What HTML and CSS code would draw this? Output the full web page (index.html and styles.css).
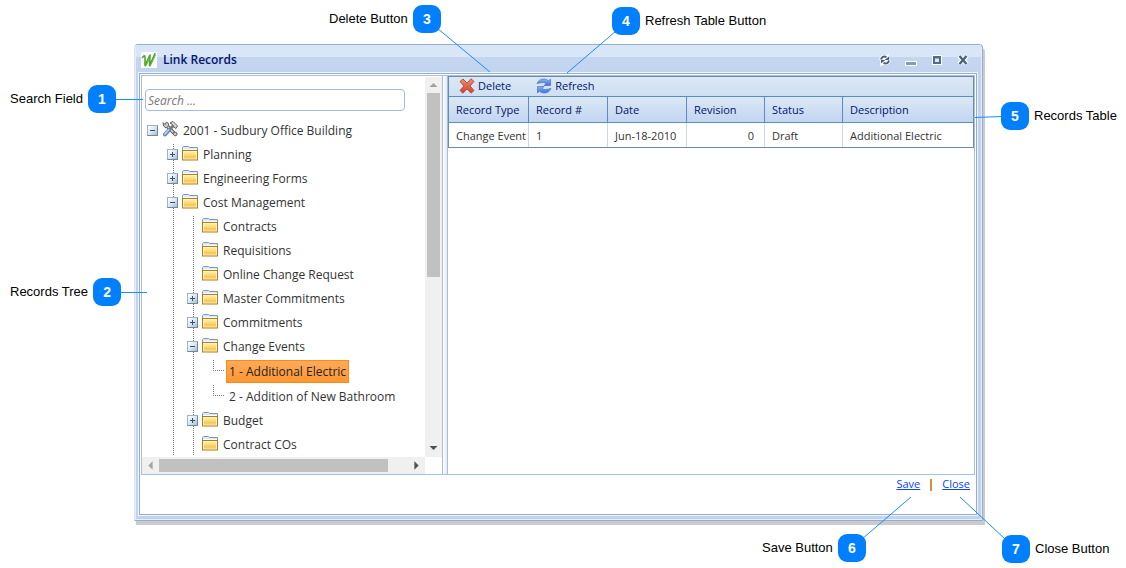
FILE: index.html
```html
<!DOCTYPE html>
<html lang="en">
<head>
<meta charset="utf-8">
<title>Link Records</title>
<link rel="stylesheet" href="styles.css">
</head>
<body>
<svg class="defs" aria-hidden="true">
  <defs>
    <linearGradient id="gold" x1="0" y1="0" x2="0" y2="1"><stop offset="0" stop-color="#fdeaa6"/><stop offset=".45" stop-color="#fbd879"/><stop offset=".7" stop-color="#f6c44f"/><stop offset="1" stop-color="#fde28c"/></linearGradient>
    <linearGradient id="red" x1="0" y1="0" x2="0" y2="1"><stop offset="0" stop-color="#ee8d75"/><stop offset="1" stop-color="#d2402c"/></linearGradient>
    <linearGradient id="blue" x1="0" y1="0" x2="0" y2="1"><stop offset="0" stop-color="#8db3ee"/><stop offset="1" stop-color="#3f70d0"/></linearGradient>
    <symbol id="folder" viewBox="0 0 16 15">
      <path d="M.5 4V1.500L1.500 .5H6.500L7.500 1.500H15.500V4" fill="#dcebf5" stroke="#8296a8"/>
      <path d="M1 3.500H15" stroke="#f5fbff"/>
      <rect x=".5" y="4.500" width="15" height="9.500" fill="#fff3c8" stroke="#aa8018"/>
      <rect x="2" y="6" width="12" height="7" fill="url(#gold)"/>
    </symbol>
  </defs>
</svg>
<main class="page">
  <section class="window" aria-labelledby="window-title">
    <header class="titlebar">
      <svg class="logo" viewBox="0 0 16 16" aria-hidden="true"><rect width="16" height="16" fill="#fff"/><path d="M1.500 5.500Q4 2 4 6L4 13.500L9 3L8.500 13.500L14 1.500" fill="none" stroke="#4fa62c" stroke-width="1.600" stroke-linejoin="round" stroke-linecap="round"/><path d="M4.500 14.500L8.500 7M9 14.500L14.500 3" stroke="#5fb034"/></svg>
      <h1 id="window-title">Link Records</h1>
      <div class="window-tools">
        <button type="button" aria-label="Reload"><svg viewBox="0 0 12 12"><path d="M1 5Q2 1 7 2L9 1V6H5L3 7ZM11 7Q10 11 5 10L2 11.500V6H7L9 5Z" fill="#fff" stroke="#fff" stroke-width="1.500"/><path d="M2 5.500Q3 1.500 7.500 3M10 6.500Q9 10.500 4.500 9" fill="none" stroke="#4c617d" stroke-width="2"/><path d="M10 2.500V6H5.500ZM2 9.500V6H6.500Z" fill="#4c617d"/></svg></button>
        <button type="button" aria-label="Minimize"><svg viewBox="0 0 12 12"><path d="M0 7H12V12H0Z" fill="#fff"/><path d="M1 8H11V11H1Z" fill="#8799b3"/></svg></button>
        <button type="button" aria-label="Maximize"><svg viewBox="0 0 12 12"><path d="M1 1H11V11H1Z" fill="#fff"/><path d="M2 2H10V10H2Z" fill="#566b88"/><path d="M4 4.500H8V8H4Z" fill="#dce7f5"/></svg></button>
        <button type="button" aria-label="Close window"><svg viewBox="0 0 12 12"><path d="M2 2L10 10M10 2L2 10" stroke="#fff" stroke-width="4.500"/><path d="M2.500 2L9.500 10M9.500 2L2.500 10" stroke="#4c617d" stroke-width="2.400"/></svg></button>
      </div>
    </header>
    <div class="frame">
      <div class="panes">
        <aside class="tree-pane">
          <div class="tree-view">
            <input class="search" type="text" placeholder="Search ..." aria-label="Search">
            <ul class="tree">
              <li>
                <div class="node"><button type="button" class="toggle open" aria-label="Collapse project"></button>
                  <svg class="tools" viewBox="0 0 16 16" aria-hidden="true"><path d="M4 4L13 13" stroke="#555" stroke-width="3.500" stroke-linecap="round"/><path d="M4 4L13 13" stroke="#ddd" stroke-width="1.500"/><path d="M1 1.500L3 3.500L4.500 1L6.500 2.500V5L4 7L1.500 5Z" fill="#c8c8c8" stroke="#666"/><path d="M12 4L7 9" stroke="#777" stroke-width="3"/><path d="M8 2L11 .500L15.500 5L14 7.500L12 6L10.500 3.500Z" fill="#ddd" stroke="#5b5b5b"/><path d="M7 9L3 13.500" stroke="#6985bf" stroke-width="4" stroke-linecap="round"/><path d="M6.500 9L3 13" stroke="#b9cff4" stroke-width="1.800" stroke-linecap="round"/><path d="M12 11L15 12V14L13 15L11 13Z" fill="#ccc" stroke="#666"/></svg>
                  <span>2001 - Sudbury Office Building</span></div>
                <ul class="branch">
                  <li><div class="node"><button type="button" class="toggle" aria-label="Expand Planning"></button><svg class="folder"><use href="#folder"/></svg><span>Planning</span></div></li>
                  <li><div class="node"><button type="button" class="toggle" aria-label="Expand Engineering Forms"></button><svg class="folder"><use href="#folder"/></svg><span>Engineering Forms</span></div></li>
                  <li><div class="node"><button type="button" class="toggle open" aria-label="Collapse Cost Management"></button><svg class="folder"><use href="#folder"/></svg><span>Cost Management</span></div>
                    <ul class="branch">
                      <li><div class="node plain"><svg class="folder"><use href="#folder"/></svg><span>Contracts</span></div></li>
                      <li><div class="node plain"><svg class="folder"><use href="#folder"/></svg><span>Requisitions</span></div></li>
                      <li><div class="node plain"><svg class="folder"><use href="#folder"/></svg><span>Online Change Request</span></div></li>
                      <li><div class="node"><button type="button" class="toggle" aria-label="Expand Master Commitments"></button><svg class="folder"><use href="#folder"/></svg><span>Master Commitments</span></div></li>
                      <li><div class="node"><button type="button" class="toggle" aria-label="Expand Commitments"></button><svg class="folder"><use href="#folder"/></svg><span>Commitments</span></div></li>
                      <li><div class="node"><button type="button" class="toggle open" aria-label="Collapse Change Events"></button><svg class="folder"><use href="#folder"/></svg><span>Change Events</span></div>
                        <ul class="leaves">
                          <li><span class="leaf selected">1 - Additional Electric</span></li>
                          <li><span class="leaf">2 - Addition of New Bathroom</span></li>
                        </ul>
                      </li>
                      <li><div class="node"><button type="button" class="toggle" aria-label="Expand Budget"></button><svg class="folder"><use href="#folder"/></svg><span>Budget</span></div></li>
                      <li><div class="node plain"><svg class="folder"><use href="#folder"/></svg><span>Contract COs</span></div></li>
                    </ul>
                  </li>
                </ul>
              </li>
            </ul>
          </div>
          <div class="vscroll" aria-hidden="true">
            <svg viewBox="0 0 16 16"><path d="M4 10H12L8 6Z" fill="#a3a3a3"/></svg>
            <div class="track"><div class="thumb"></div></div>
            <svg viewBox="0 0 16 16"><path d="M4 5H12L8 9Z" fill="#505050"/></svg>
          </div>
          <div class="hscroll" aria-hidden="true">
            <svg viewBox="0 0 16 16"><path d="M10 4V12L6 8Z" fill="#a3a3a3"/></svg>
            <div class="track"><div class="thumb"></div></div>
            <svg viewBox="0 0 16 16"><path d="M6 4V12L10 8Z" fill="#505050"/></svg>
          </div>
        </aside>
        <div class="splitter"></div>
        <div class="records">
          <div class="grid">
            <div class="toolbar">
              <button type="button"><svg viewBox="0 0 16 16" aria-hidden="true"><path d="M1 3.500L4 1L8 5L12 .800L15 3.500L11 8L15 12.500L12 15.200L8 11L4 15.200L1 12.500L5 8Z" fill="url(#red)" stroke="#b8513f" stroke-linejoin="round"/></svg>Delete</button>
              <button type="button"><svg viewBox="0 0 16 16" aria-hidden="true"><g fill="url(#blue)" stroke="#4775c5" stroke-width=".7" stroke-linejoin="round"><path d="M1 5.500Q3 1 8 1Q11 1 12.500 3L14.500 1V7.500H8L10 5.500Q8 4 6 4.500Q3.500 5 1 5.500Z"/><path d="M15 10.500Q13 15 8 15Q5 15 3.500 13L1.500 15V8.500H8L6 10.500Q8 12 10 11.500Q12.500 11 15 10.500Z"/></g></svg>Refresh</button>
            </div>
            <table>
              <colgroup><col class="wide"><col><col><col><col><col class="rest"></colgroup>
              <thead><tr><th>Record Type</th><th>Record #</th><th>Date</th><th>Revision</th><th>Status</th><th>Description</th></tr></thead>
              <tbody><tr><td>Change Event</td><td>1</td><td>Jun-18-2010</td><td class="num">0</td><td>Draft</td><td>Additional Electric</td></tr></tbody>
            </table>
          </div>
        </div>
      </div>
      <footer class="actions"><a href="#save">Save</a><span class="divider"></span><a href="#close">Close</a></footer>
    </div>
  </section>

  <svg class="leaders" viewBox="0 0 1126 568" aria-hidden="true">
    <path d="M115 99.500H143M119 292.500H147M437 28L490 72M616 31L567 73M975 117.500L1002 116.500M862 539L911 497M1005 539L960 497"/>
  </svg>
  <div class="callout c1">Search Field<b>1</b></div>
  <div class="callout c2">Records Tree<b>2</b></div>
  <div class="callout c3">Delete Button<b>3</b></div>
  <div class="callout c4"><b>4</b>Refresh Table Button</div>
  <div class="callout c5"><b>5</b>Records Table</div>
  <div class="callout c6">Save Button<b>6</b></div>
  <div class="callout c7"><b>7</b>Close Button</div>
</main>
</body>
</html>
```

FILE: styles.css
```css
* { box-sizing: border-box; }
body { margin: 0; background: #fff; color: #333; font: 12px/16px "Open Sans", "Noto Sans", sans-serif; }
button, input { font: inherit; color: inherit; }
button { padding: 0; border: 0; background: none; }
svg { display: block; flex: none; }
ul { margin: 0; padding: 0; list-style: none; }
.defs { position: absolute; width: 0; height: 0; }
.page { position: relative; min-height: 100vh; padding: 44px 141px 43px 134px; }

/* window chrome */
.window {
  padding: 0 5px 5px 4px;
  border: 1px solid #94add0;
  border-left-color: #dbe6f5;
  border-radius: 4px 4px 0 0;
  background: #c1d3ee;
  box-shadow: inset 0 0 0 1px #e4eefb, 2px 4px 0 #cbcbcb;
  margin: 0 2px 4px 0;
}
.titlebar {
  display: flex;
  align-items: center;
  height: 28px;
  margin: 0 -4px 0 -3px;
  padding: 2px 12px 0 5px;
  background: linear-gradient(#d9e6f7 0 12px, #c5d7f0 12px, #c2d4ed);
}
.logo { width: 16px; height: 16px; }
.titlebar h1 { flex: 1; margin: 0 0 0 6px; color: #00156e; font-size: 12px; line-height: 16px; font-weight: 600; }
.window-tools { display: flex; gap: 14px; }
.window-tools svg { width: 12px; height: 12px; }
.frame { padding: 1px; border: 1px solid #94add0; background: #fff; outline: 1px solid #f2f7fd; }
.panes { display: flex; border: 1px solid #a9bfde; }

/* tree pane */
.tree-pane { display: grid; grid-template: 1fr 17px / 1fr 17px; width: 300px; padding-top: 1px; flex: none; }
.tree-view { padding: 12px 0 1px 3px; overflow: hidden; }
.search {
  display: block;
  width: 260px;
  height: 22px;
  margin-bottom: 7px;
  padding: 0 2px;
  border: 1px solid #a3bde0;
  border-radius: 4px;
  outline: 0;
  font-style: italic;
}
.search::placeholder { color: #777; opacity: 1; }
.tree { padding-left: 2px; color: #333; }
.node { display: flex; align-items: center; height: 24px; white-space: nowrap; }
.node.plain { padding-left: 15px; }
.node span { margin-left: 5px; padding-top: 2px; }
.toggle {
  position: relative;
  width: 11px;
  height: 11px;
  margin-right: 4px;
  border: 1px solid #9fb3c6;
  border-right-color: #71889e;
  border-bottom-color: #71889e;
  background: linear-gradient(135deg, #fff, #dce7f0 50%, #a5bdd1);
}
.toggle::before, .toggle:not(.open)::after { content: ""; position: absolute; background: #34506b; }
.toggle::before { left: 2px; top: 4px; width: 5px; height: 1px; }
.toggle:not(.open)::after { left: 4px; top: 2px; width: 1px; height: 5px; }
.folder { width: 16px; height: 15px; margin-bottom: 2px; }
.tools { width: 16px; height: 16px; margin-bottom: 2px; }
.branch { margin-left: 20px; background: repeating-linear-gradient(#777 0 1px, transparent 1px 2px) 6px 2px / 1px 100% no-repeat; }
.leaves { margin-left: 20px; }
.leaves li {
  display: flex;
  align-items: center;
  height: 25px;
  padding: 1px 0 0 19px;
  background:
    repeating-linear-gradient(#777 0 1px, transparent 1px 2px) 6px 2px / 1px 10px no-repeat,
    repeating-linear-gradient(90deg, #777 0 1px, transparent 1px 2px) 6px 12px / 11px 1px no-repeat;
}
.leaf { height: 23px; padding: 2px; border: 1px solid transparent; line-height: 18px; white-space: nowrap; }
.leaf.selected { border-color: #f98b1b; background: linear-gradient(#ffaa59, #fd9732); color: #222; }

/* scroll bars */
.vscroll, .hscroll { display: flex; background: #f0f0f0; }
.vscroll { flex-direction: column; }
.vscroll svg, .hscroll svg { width: 17px; height: 17px; }
.vscroll svg { height: 16px; }
.track { flex: 1; }
.thumb { background: #c1c1c1; }
.vscroll .thumb { width: 13px; height: 53%; margin-left: 2px; }
.hscroll .thumb { width: 92%; height: 13px; margin-top: 2px; }
.splitter { width: 6px; flex: none; border: solid #a9bfde; border-width: 0 1px; background: linear-gradient(90deg, #fff, #e3e9f3); }

/* records table */
.records { flex: 1; min-width: 0; }
.grid { border: 1px solid #688caf; }
.toolbar {
  display: flex;
  align-items: center;
  height: 19px;
  padding: 0 0 2px 10px;
  gap: 25px;
  background: linear-gradient(#dbe7f3, #cfe0f2);
  color: #00156e;
  font-size: 11px;
}
.toolbar button { display: flex; align-items: center; gap: 3px; }
.toolbar svg { width: 16px; height: 16px; }
table { width: 100%; border-collapse: separate; border-spacing: 0; table-layout: fixed; }
col { width: 78px; }
col.wide { width: 80px; }
col:nth-child(2), col:nth-child(3) { width: 79px; }
col.rest { width: auto; }
th, td { overflow: hidden; padding: 0 0 0 7px; text-align: left; font-size: 11px; white-space: nowrap; }
th {
  height: 27px;
  border: solid #5b8bc9;
  border-width: 1px 1px 1px 0;
  background: linear-gradient(#dce8f4, #c0d6f2);
  color: #00156e;
  font-weight: 400;
}
td { height: 24px; padding-top: 2px; border-right: 1px solid #d0d7e5; }
th:last-child, td:last-child { border-right: 0; }
td.num { padding-right: 10px; text-align: right; }
.actions { display: flex; justify-content: flex-end; align-items: flex-start; min-height: 38px; padding: 1px 5px 0; font-size: 11px; }
.actions a { color: #0645ff; }
.divider { width: 2px; height: 12px; margin: 3px 10px 0; background: #dc8a3c; }

/* callouts over the window */
.leaders { position: absolute; left: 0; top: 0; width: 1126px; height: 568px; pointer-events: none; }
.leaders path { fill: none; stroke: #1a8cff; }
.callout { position: absolute; display: flex; align-items: center; gap: 5px; color: #000; font: 13px/16px "Liberation Sans", Arial, sans-serif; white-space: nowrap; }
.callout b { width: 28px; height: 28px; border-radius: 9px; background: #0080ff; color: #fff; font-size: 14px; line-height: 28px; text-align: center; }
.c1 { left: 10px; top: 85px; }
.c2 { left: 10px; top: 278px; }
.c3 { left: 329px; top: 5px; }
.c4 { left: 612px; top: 7px; }
.c5 { left: 1001px; top: 102px; }
.c6 { left: 762px; top: 534px; }
.c7 { left: 1002px; top: 535px; }
```
